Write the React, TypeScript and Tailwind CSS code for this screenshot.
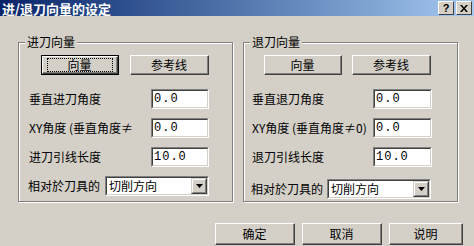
import React from 'react';

const cjk = { fontFamily: '"Noto Sans CJK SC", "Liberation Sans", sans-serif' };

// raised win2k style button
const RaisedBtn = ({ label, w, focused }: { label: string; w: string; focused?: boolean }) => {
    const inner = (
        <div className="h-full border-t border-l border-t-white border-l-white border-b border-r border-b-[#404040] border-r-[#404040]">
            <div className="h-full border-b border-r border-b-[#808080] border-r-[#808080] flex items-center justify-center">
                {focused ? (
                    <div className="h-[14px] w-[66px] border border-dotted border-black flex items-center justify-center">
                        {label}
                    </div>
                ) : (
                    label
                )}
            </div>
        </div>
    );
    return (
        <div className={`${w} h-[20px] text-[12px] text-black leading-[14px] ${focused ? 'border border-black' : ''}`} style={cjk}>
            {inner}
        </div>
    );
};

const Field = ({ value, w }: { value: string; w: string }) => (
    <div className={`${w} h-[20px] border-t border-l border-t-[#808080] border-l-[#808080] border-b border-r border-b-white border-r-white`}>
        <div className="h-full border-t border-l border-t-[#404040] border-l-[#404040] border-b border-r border-b-[#d4d0c8] border-r-[#d4d0c8] bg-white flex items-center pl-[1px]">
            <span className="text-[12px] leading-[14px] text-black tracking-[1px]" style={{ fontFamily: '"Liberation Mono", monospace' }}>
                {value}
            </span>
        </div>
    </div>
);

const Combo = ({ value }: { value: string }) => (
    <div className="w-[104px] h-[20px] border-t border-l border-t-[#808080] border-l-[#808080] border-b border-r border-b-white border-r-white">
        <div className="h-full border-t border-l border-t-[#404040] border-l-[#404040] border-b border-r border-b-[#d4d0c8] border-r-[#d4d0c8] bg-white flex items-center">
            <span className="flex-1 pl-[2px] text-[12px] leading-[14px] text-black whitespace-nowrap" style={cjk}>{value}</span>
            <div className="w-[16px] h-full border-t border-l border-t-[#d4d0c8] border-l-[#d4d0c8] border-b border-r border-b-[#404040] border-r-[#404040] bg-[#d4d0c8]">
                <div className="h-full border-t border-l border-t-white border-l-white border-b border-r border-b-[#808080] border-r-[#808080] flex items-center justify-center">
                    <svg width="7" height="4" viewBox="0 0 7 4"><path d="M0 0h7L3.5 4z" fill="#000" /></svg>
                </div>
            </div>
        </div>
    </div>
);

const Group = ({
    title, pl, btnGap, labelW, inputW, combo, comboTop, labels, focused,
}: {
    title: string; pl: string; btnGap: string; labelW: string; inputW: string; combo: string; comboTop: string;
    labels: string[]; focused?: boolean;
}) => (
    <div className="relative w-[215px] h-[160px] border border-[#808080] shadow-[inset_1px_1px_0_#fff,1px_1px_0_#fff]">
        <span className="absolute left-[6px] -top-[8px] px-[2px] bg-[#d4d0c8] text-[12px] leading-[14px] text-black" style={cjk}>
            {title}
        </span>
        <div className={`flex flex-col ${pl} pt-[12px]`}>
            <div className={`flex ${btnGap}`}>
                <RaisedBtn label="向量" w="w-[78px]" focused={focused} />
                <RaisedBtn label="参考线" w="w-[79px]" />
            </div>
            <div className="flex flex-col -ml-[12px] mt-[14px] gap-[9px]">
                {labels.map((l, i) => (
                    <div key={l} className="flex items-center h-[20px]">
                        <div className={`${labelW} whitespace-nowrap text-[12px] text-black leading-[14px]`} style={cjk}>
                            {l}
                        </div>
                        <Field value={i === 2 ? '10.0' : '0.0'} w={inputW} />
                    </div>
                ))}
            </div>
            <div className={`flex items-center -ml-[13px] ${comboTop}`}>
                <div className={`${combo} text-[12px] text-black leading-[14px] whitespace-nowrap`} style={cjk}>相对於刀具的</div>
                <Combo value="切削方向" />
            </div>
        </div>
    </div>
);

export default function App() {
    return (
        <div className="w-[474px] h-[246px] bg-[#d4d0c8] flex flex-col overflow-hidden">
            <div className="h-[16px] flex items-center justify-between bg-gradient-to-r from-[#0a246a] to-[#a6caf0] pl-[2px] pr-[2px]">
                <span className="text-white font-bold text-[13px] leading-[15px]" style={cjk}>进/退刀向量的设定</span>
                <div className="flex gap-[2px]">
                    <div className="w-[16px] h-[14px] bg-[#d4d0c8] border-t border-l border-t-white border-l-white border-b border-r border-b-[#404040] border-r-[#404040] flex items-center justify-center">
                        <span className="text-[11px] font-bold leading-[12px] text-black" style={{ fontFamily: '"Liberation Sans", sans-serif' }}>?</span>
                    </div>
                    <div className="w-[16px] h-[14px] bg-[#d4d0c8] border-t border-l border-t-white border-l-white border-b border-r border-b-[#404040] border-r-[#404040] flex items-center justify-center">
                        <svg width="8" height="7" viewBox="0 0 8 7">
                            <path d="M0 0h2l2 2.5L6 0h2L5 3.5 8 7H6L4 4.5 2 7H0l3-3.5z" fill="#000" />
                        </svg>
                    </div>
                </div>
            </div>

            <div className="flex pl-[18px] pt-[26px] gap-[10px]">
                <Group
                    title="进刀向量"
                    pl="pl-[22px]"
                    btnGap="gap-[11px]"
                    labelW="w-[122px]"
                    inputW="w-[58px]"
                    combo="w-[77px]"
                    comboTop="mt-[9px]"
                    labels={['垂直进刀角度', 'XY角度 (垂直角度≠', '进刀引线长度']}
                    focused
                />
                <Group
                    title="退刀向量"
                    pl="pl-[20px]"
                    btnGap="gap-[10px]"
                    labelW="w-[121px]"
                    inputW="w-[59px]"
                    combo="w-[76px]"
                    comboTop="mt-[12px]"
                    labels={['垂直退刀角度', 'XY角度 (垂直角度≠0)', '退刀引线长度']}
                />
            </div>

            <div className="flex justify-end gap-[7px] pr-[11px] mt-[21px]">
                <RaisedBtn label="确定" w="w-[80px] !h-[22px]" />
                <RaisedBtn label="取消" w="w-[80px] !h-[22px]" />
                <RaisedBtn label="说明" w="w-[74px] !h-[22px]" />
            </div>
        </div>
    );
}
